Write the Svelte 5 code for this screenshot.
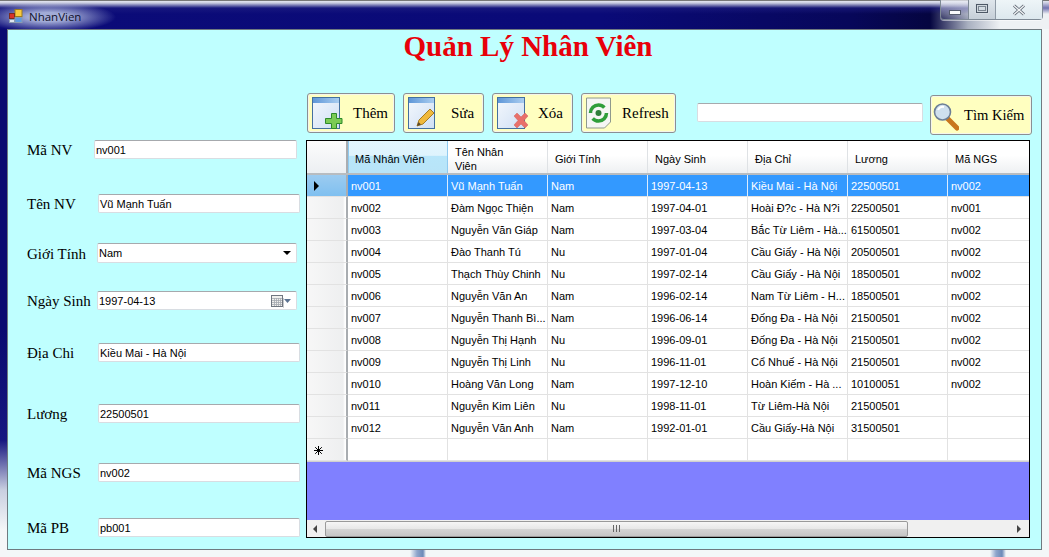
<script>
  const fields = [
    { label: 'Mã NV', value: 'nv001', gap: 47, left: 67, width: 203 },
    { label: 'Tên NV', value: 'Vũ Mạnh Tuấn', gap: 35, left: 71, width: 202 },
    { label: 'Giới Tính', value: 'Nam', gap: 30, left: 70, width: 200, kind: 'combo' },
    { label: 'Ngày Sinh', value: '1997-04-13', gap: 28, left: 70, width: 200, kind: 'date' },
    { label: 'Địa Chi', value: 'Kiều Mai - Hà Nội', gap: 33, left: 71, width: 202 },
    { label: 'Lương', value: '22500501', gap: 42, left: 71, width: 202 },
    { label: 'Mã NGS', value: 'nv002', gap: 40, left: 71, width: 202 },
    { label: 'Mã PB', value: 'pb001', gap: 36, left: 71, width: 202 }
  ];

  const columns = ['Mã Nhân Viên', 'Tên Nhân Viên', 'Giới Tính', 'Ngày Sinh', 'Địa Chỉ', 'Lương', 'Mã NGS'];

  const rows = [
    ['nv001', 'Vũ Mạnh Tuấn', 'Nam', '1997-04-13', 'Kiều Mai - Hà Nội', '22500501', 'nv002'],
    ['nv002', 'Đàm Ngọc Thiện', 'Nam', '1997-04-01', 'Hoài Đ?c - Hà N?i', '22500501', 'nv001'],
    ['nv003', 'Nguyễn Văn Giáp', 'Nam', '1997-03-04', 'Bắc Từ Liêm - Hà...', '61500501', 'nv002'],
    ['nv004', 'Đào Thanh Tú', 'Nu', '1997-01-04', 'Cầu Giấy - Hà Nội', '20500501', 'nv002'],
    ['nv005', 'Thạch Thùy Chinh', 'Nu', '1997-02-14', 'Cầu Giấy - Hà Nội', '18500501', 'nv002'],
    ['nv006', 'Nguyễn Văn An', 'Nam', '1996-02-14', 'Nam Từ Liêm - H...', '18500501', 'nv002'],
    ['nv007', 'Nguyễn Thanh Bì...', 'Nam', '1996-06-14', 'Đống Đa - Hà Nội', '21500501', 'nv002'],
    ['nv008', 'Nguyễn Thị Hạnh', 'Nu', '1996-09-01', 'Đống Đa - Hà Nội', '21500501', 'nv002'],
    ['nv009', 'Nguyễn Thị Linh', 'Nu', '1996-11-01', 'Cổ Nhuế - Hà Nội', '21500501', 'nv002'],
    ['nv010', 'Hoàng Văn Long', 'Nam', '1997-12-10', 'Hoàn Kiếm - Hà ...', '10100051', 'nv002'],
    ['nv011', 'Nguyễn Kim Liên', 'Nu', '1998-11-01', 'Từ Liêm-Hà Nội', '21500501', ''],
    ['nv012', 'Nguyễn Văn Anh', 'Nam', '1992-01-01', 'Cầu Giấy-Hà Nội', '31500501', '']
  ];
</script>

<div class="window">
  <div class="titlebar">
    <svg class="app-icon" width="14" height="14" viewBox="0 0 14 14">
      <rect x="6" y="0.5" width="7" height="7" fill="#f7c93e" stroke="#9a7a20" />
      <rect x="0.5" y="4.5" width="5" height="5" fill="#d8322a" stroke="#7a2a20" />
      <rect x="6" y="8.5" width="7" height="5" fill="#5d9ae0" stroke="#8a9ab0" />
      <rect x="0.5" y="10.5" width="5" height="3" fill="#dfe5ee" stroke="#8a9ab0" />
    </svg>
    <span class="app-name">NhanVien</span>
    <div class="caption-btns">
      <div class="cap cap-min"><span class="min-glyph"></span></div>
      <div class="cap cap-max"><span class="max-glyph"></span></div>
      <div class="cap cap-close">
        <svg width="14" height="12" viewBox="0 0 14 12">
          <path d="M2 1.5 L12 10.5 M12 1.5 L2 10.5" stroke="#5a6470" stroke-width="3" />
          <path d="M2 1.5 L12 10.5 M12 1.5 L2 10.5" stroke="#f2f4f6" stroke-width="1.4" />
        </svg>
      </div>
    </div>
  </div>

  <div class="client">
    <h1 class="heading">Quản Lý Nhân Viên</h1>

    <div class="main">
      <div class="form">
        {#each fields as f}
          <div class="field" style="margin-top: {f.gap}px">
            <span class="field-label" style="width: {f.left}px">{f.label}</span>
            <div class="input" class:tall={f.kind === 'combo'} style="width: {f.width}px">
              <span class="input-text">{f.value}</span>
              {#if f.kind === 'combo'}
                <span class="combo-arrow"></span>
              {:else if f.kind === 'date'}
                <svg class="cal" width="21" height="14" viewBox="0 0 21 14">
                  <rect x="1.5" y="1.5" width="11" height="11" fill="#f0f0ee" stroke="#6f7680" />
                  <path d="M2 4.5h10M2 6.5h10M2 8.5h10M2 10.5h10M4.5 4v8M6.5 4v8M8.5 4v8M10.5 4v8" stroke="#a4a9b0" stroke-width="0.8" />
                  <path d="M13 13.5h0.5V4" stroke="#c4c8cc" fill="none" />
                  <path d="M14 5h7l-3.5 4z" fill="#5b7391" />
                </svg>
              {/if}
            </div>
          </div>
        {/each}
      </div>

      <div class="right">
        <div class="toolbar">
          <button class="btn btn-them">
            <svg class="btn-icon" width="32" height="33" viewBox="0 0 32 33">
              <defs>
                <linearGradient id="page" x1="0" y1="0" x2="1" y2="1">
                  <stop offset="0" stop-color="#f4f8fd" />
                  <stop offset="1" stop-color="#cfdff4" />
                </linearGradient>
                <linearGradient id="bar" x1="0" y1="0" x2="1" y2="0">
                  <stop offset="0" stop-color="#5f97d8" />
                  <stop offset="1" stop-color="#a9cdf0" />
                </linearGradient>
              </defs>
              <rect x="0.5" y="0.5" width="27" height="31" fill="url(#page)" stroke="#44709f" />
              <rect x="1" y="1" width="26" height="5" fill="url(#bar)" />
              <path d="M19.5 16.5h5v5h5.5v5h-5.5v5h-5v-5h-6v-5h6z" fill="#7ccb55" stroke="#2f8a2a" />
            </svg>
            <span class="btn-text">Thêm</span>
          </button>
          <button class="btn btn-sua">
            <svg class="btn-icon" width="28" height="33" viewBox="0 0 28 33">
              <rect x="0.5" y="0.5" width="26" height="31" fill="url(#page)" stroke="#44709f" />
              <rect x="1" y="1" width="25" height="5" fill="url(#bar)" />
              <path d="M9 29 L11 23 L22 12 L26 16 L15 27 Z" fill="#f0b93c" stroke="#a57c24" />
              <path d="M9 29 L10.5 25 L13 27.5 Z" fill="#5a4a30" />
            </svg>
            <span class="btn-text">Sửa</span>
          </button>
          <button class="btn btn-xoa">
            <svg class="btn-icon" width="32" height="33" viewBox="0 0 32 33">
              <rect x="0.5" y="0.5" width="27" height="31" fill="url(#page)" stroke="#44709f" />
              <rect x="1" y="1" width="26" height="5" fill="url(#bar)" />
              <path d="M17 19 L20 16 L24 20 L28 16 L31 19 L27 23.5 L31 28 L28 31 L24 27 L20 31 L17 28 L21 23.5 Z" fill="#e8706a" stroke="#d0605a" stroke-width="0.5" />
            </svg>
            <span class="btn-text">Xóa</span>
          </button>
          <button class="btn btn-refresh">
            <svg class="btn-icon" width="26" height="33" viewBox="0 0 26 33">
              <path d="M0.5 1h24v24l-6 6h-18z" fill="#f5f6f4" stroke="#8f9a8c" />
              <circle cx="12.5" cy="16" r="8" fill="none" stroke="#2f9e3a" stroke-width="3.5" stroke-dasharray="19 6" />
              <circle cx="12.5" cy="16" r="3" fill="#2f7e3a" />
            </svg>
            <span class="btn-text">Refresh</span>
          </button>
          <div class="search-box"></div>
          <button class="btn btn-search">
            <svg class="btn-icon" width="26" height="32" viewBox="0 0 26 32">
              <path d="M15 20 L24 29" stroke="#c9761c" stroke-width="5" stroke-linecap="round" />
              <circle cx="9.5" cy="13" r="8" fill="#cfe0ee" stroke="#6d7f96" stroke-width="1.6" />
              <path d="M5 11 a5 5 0 0 1 6 -3" stroke="#fff" stroke-width="2" fill="none" />
            </svg>
            <span class="btn-text">Tìm Kiếm</span>
          </button>
        </div>

        <div class="grid">
          <div class="grid-row head">
            <div class="row-head corner"></div>
            {#each columns as col, i}
              <div class="head-cell" class:sort={i === 0}><span class="head-text">{col}</span></div>
            {/each}
          </div>
          {#each rows as row, r}
            <div class="grid-row" class:selected={r === 0}>
              <div class="row-head" class:current={r === 0}>
                {#if r === 0}<span class="row-arrow"></span>{/if}
              </div>
              {#each row as cell}
                <div class="cell">{cell}</div>
              {/each}
            </div>
          {/each}
          <div class="grid-row">
            <div class="row-head">
              <svg class="star" width="9" height="9" viewBox="0 0 9 9">
                <path d="M4.5 0v9M0 4.5h9M1.2 1.2l6.6 6.6M7.8 1.2l-6.6 6.6" stroke="#000" stroke-width="1" />
              </svg>
            </div>
            {#each columns as _}
              <div class="cell"></div>
            {/each}
          </div>
          <div class="grid-empty"></div>
          <div class="scrollbar">
            <span class="arrow-left"></span>
            <div class="thumb"><span class="grip"></span></div>
            <span class="arrow-right"></span>
          </div>
        </div>
      </div>
    </div>
  </div>
</div>

<style>
  :global(body) {
    margin: 0;
  }

  .window {
    width: 1049px;
    height: 557px;
    overflow: hidden;
    box-sizing: border-box;
    font-family: "Liberation Sans", sans-serif;
    background:
      linear-gradient(90deg, transparent 410px, #8fa6cc 417px, #6d8ab8 423px, transparent 426px, transparent 990px, #8fa6cc 996px, #6d8ab8 1002px, transparent 1006px) 0 550px / 100% 7px no-repeat,
      linear-gradient(180deg, #0a0a70 0, #0a0a70 330px, #161680 440px, #c9cfe0 490px, #f4f6f8 530px) 0 0 / 7px 100% no-repeat,
      #f3f7f8;
  }

  .titlebar {
    height: 29px;
    position: relative;
    display: flex;
    align-items: center;
    padding: 3px 0 0 9px;
    box-sizing: border-box;
    background:
      radial-gradient(ellipse 68px 15px at 48px 17px, rgba(200, 212, 238, 0.8) 30%, rgba(200, 212, 238, 0) 100%),
      linear-gradient(180deg, #f2f3f8 0, #c8cbe0 3px, rgba(30, 30, 130, 0.6) 8px, rgba(0, 0, 0, 0) 14px),
      linear-gradient(90deg, #0b0b78 0, #0a0a78 600px, #07075a 850px, #050540 930px, #a9b0c0 968px, #eef1f4 1000px);
    box-shadow: inset 0 1px 0 #777;
  }

  .app-icon {
    flex: none;
  }

  .app-name {
    margin-left: 6px;
    font-family: "Open Sans", sans-serif;
    font-size: 11.5px;
    color: #10102a;
  }

  .caption-btns {
    position: absolute;
    left: 940px;
    top: 0;
    width: 103px;
    height: 20px;
    display: flex;
    box-sizing: border-box;
    border: 1px solid #7f8a96;
    border-top: none;
    border-radius: 0 0 4px 4px;
    box-shadow: 0 1px 0 rgba(255, 255, 255, 0.5);
  }

  .cap {
    display: flex;
    align-items: center;
    justify-content: center;
    box-sizing: border-box;
  }

  .cap-min {
    width: 28px;
    background: linear-gradient(180deg, rgba(235, 238, 245, 0.75), rgba(30, 30, 90, 0.1));
    border-right: 1px solid #7f8a96;
  }

  .cap-max {
    width: 27px;
    background: linear-gradient(180deg, #dfe6ec, #c6cfd8);
    border-right: 1px solid #8f9aa6;
  }

  .cap-close {
    flex: 1;
    background: linear-gradient(180deg, #eef5f8, #dde8ee);
  }

  .min-glyph {
    width: 10px;
    height: 3px;
    margin-top: 6px;
    background: #f8f9fb;
    box-shadow: 0 0 0 1px #555c6e;
  }

  .max-glyph {
    width: 10px;
    height: 7px;
    margin-top: -2px;
    border: 1px solid #4d5866;
    outline: 1px solid #d5dce3;
    box-shadow: inset 0 0 0 1px #cfd6dd, inset 0 0 0 2px #7a8490;
  }

  .client {
    height: 521px;
    margin: 0 7px;
    box-sizing: border-box;
    background: #bfffff;
    border: 1px solid #6f7a80;
    display: flex;
    flex-direction: column;
  }

  .heading {
    margin: 0;
    height: 63px;
    padding: 0 0 0 7px;
    text-align: center;
    font-family: "Liberation Serif", serif;
    font-size: 29px;
    line-height: 33px;
    font-weight: bold;
    color: #e8000a;
  }

  .main {
    display: flex;
    flex: 1;
    min-height: 0;
  }

  .form {
    width: 298px;
    padding-left: 19px;
    box-sizing: border-box;
    flex: none;
  }

  .field {
    display: flex;
    align-items: center;
  }

  .field-label {
    flex: none;
    padding-top: 2px;
    font-family: "Liberation Serif", serif;
    font-size: 15px;
    line-height: 17px;
    white-space: nowrap;
    color: #000;
  }

  .input {
    height: 19px;
    flex: none;
    display: flex;
    align-items: center;
    box-sizing: border-box;
    background: #fff;
    border: 1px solid #d8dde2;
    border-top-color: #a6a9ad;
    border-radius: 2px;
    padding-left: 1px;
    font-size: 11px;
    position: relative;
  }

  .input.tall {
    height: 20px;
  }

  .input-text {
    flex: 1;
  }

  .combo-arrow {
    width: 0;
    height: 0;
    margin-right: 5px;
    border-left: 4px solid transparent;
    border-right: 4px solid transparent;
    border-top: 4px solid #000;
  }

  .cal {
    margin-right: 5px;
  }

  .right {
    flex: 1;
    min-width: 0;
  }

  .toolbar {
    display: flex;
    align-items: flex-start;
    height: 47px;
    padding-left: 1px;
  }

  .btn {
    height: 40px;
    display: flex;
    align-items: center;
    padding: 0 0 0 4px;
    margin: 0;
    box-sizing: border-box;
    background: #ffffc0;
    border: 1px solid #8a8f94;
    border-radius: 3px;
    box-shadow: inset 0 0 0 1px #f4f6ea;
    font-family: "Liberation Serif", serif;
    font-size: 15px;
    color: #000;
  }

  .btn-text {
    white-space: nowrap;
  }

  .btn-icon {
    flex: none;
  }

  .btn-them { width: 88px; }
  .btn-them .btn-text { margin-left: 9px; }
  .btn-sua { width: 81px; margin-left: 8px; }
  .btn-sua .btn-text { margin-left: 15px; }
  .btn-xoa { width: 81px; margin-left: 8px; }
  .btn-xoa .btn-text { margin-left: 9px; }
  .btn-refresh { width: 95px; margin-left: 8px; }
  .btn-refresh .btn-text { margin-left: 10px; }

  .search-box {
    width: 226px;
    height: 19px;
    margin: 10px 0 0 21px;
    box-sizing: border-box;
    background: #fff;
    border: 1px solid #d8dde2;
    border-top-color: #a6a9ad;
    border-radius: 2px;
  }

  .btn-search {
    width: 102px;
    margin: 2px 0 0 7px;
    padding-left: 2px;
  }

  .btn-search .btn-text { margin-left: 5px; font-size: 14.6px; }

  .grid {
    width: 724px;
    height: 398px;
    box-sizing: border-box;
    border: 1px solid #000;
    background: #8080ff;
    display: flex;
    flex-direction: column;
    font-size: 11px;
    overflow: hidden;
  }

  .grid-row {
    display: flex;
    height: 22px;
    flex: none;
    background: #fff;
    color: #000;
  }

  .grid-row.head {
    height: 34px;
    background: #f0f0f0;
    border-bottom: 2px solid #b8bcc0;
    box-sizing: border-box;
  }

  .row-head {
    width: 41px;
    flex: none;
    box-sizing: border-box;
    position: relative;
    background: linear-gradient(90deg, #f7f7f7 0, #eeeff0 36px, #fff 38px);
    border-right: 2px solid #a9adb1;
    border-bottom: 1px solid #e2e2e2;
    display: flex;
    align-items: center;
  }

  .row-head.corner {
    border-bottom: none;
    background: linear-gradient(180deg, #fcfcfc, #eceff2);
  }

  .row-head.current {
    background: linear-gradient(180deg, #9ccbf0, #7fc0f0);
  }

  .row-arrow {
    margin-left: 7px;
    width: 0;
    height: 0;
    border-top: 5px solid transparent;
    border-bottom: 5px solid transparent;
    border-left: 5px solid #000;
  }

  .star {
    margin-left: 7px;
    margin-top: 1px;
  }

  .head-cell {
    width: 100px;
    flex: none;
    box-sizing: border-box;
    padding: 0 0 0 7px;
    display: flex;
    align-items: center;
    background: linear-gradient(180deg, #fff 0, #fff 45%, #eef0f2 100%);
    border-right: 1px solid #dfe2e5;
    line-height: 14px;
  }

  .head-cell.sort {
    padding-left: 6px;
    background: linear-gradient(180deg, #e2f6fe 0, #def3fd 45%, #b8e6fa 47%, #b8e4f8 100%);
    border-left: 1px solid #8fcaf0;
    border-right: 1px solid #8fcaf0;
  }

  .head-text {
    margin-top: 4px;
    max-width: 72px;
  }

  .cell {
    width: 100px;
    flex: none;
    box-sizing: border-box;
    padding: 1px 0 0 3px;
    line-height: 21px;
    white-space: nowrap;
    overflow: hidden;
    border-right: 1px solid #e2e2e2;
    border-bottom: 1px solid #e2e2e2;
  }

  .grid-row.selected {
    background: #3399ff;
    color: #fff;
  }

  .selected .cell {
    border-right-color: #dcecff;
  }

  .grid-empty {
    flex: 1;
    background: #8080ff;
    border-top: 1px solid #d0d0d0;
  }

  .scrollbar {
    height: 17px;
    flex: none;
    display: flex;
    align-items: center;
    background: #f0f0f0;
    position: relative;
  }

  .arrow-left,
  .arrow-right {
    width: 0;
    height: 0;
    flex: none;
    border-top: 4px solid transparent;
    border-bottom: 4px solid transparent;
  }

  .arrow-left {
    margin-left: 6px;
    border-right: 4px solid #444;
  }

  .arrow-right {
    margin-left: 109px;
    border-left: 4px solid #444;
  }

  .thumb {
    width: 583px;
    height: 16px;
    margin-left: 8px;
    box-sizing: border-box;
    background: linear-gradient(180deg, #f6f6f6 0, #e8e8e8 48%, #d4d4d4 52%, #c6c6c6 100%);
    border: 1px solid #9a9a9a;
    border-radius: 2px;
    display: flex;
    align-items: center;
    justify-content: center;
  }

  .grip {
    width: 7px;
    height: 7px;
    background: repeating-linear-gradient(90deg, #666 0, #666 1px, transparent 1px, transparent 3px);
  }
</style>
